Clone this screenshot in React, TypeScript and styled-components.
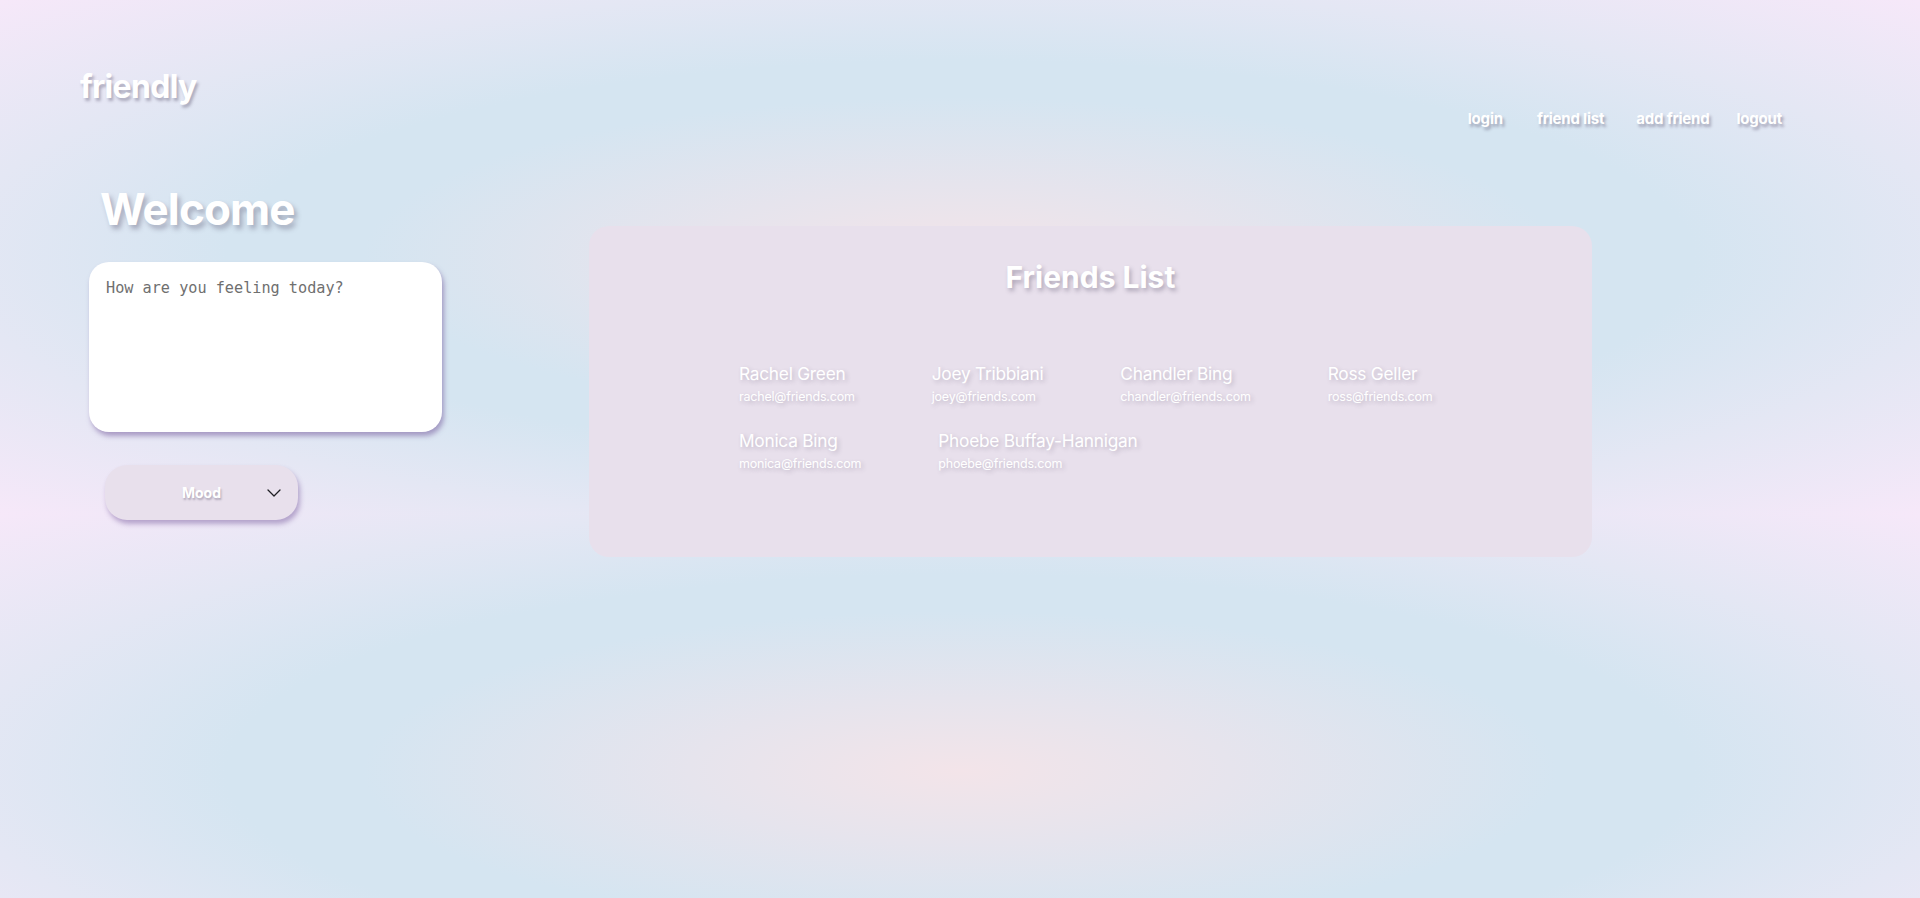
import React from "react";
import styled, { createGlobalStyle } from "styled-components";

const GlobalStyle = createGlobalStyle`
  html, body {
    margin: 0;
    padding: 0;
  }
  body {
    font-family: Inter, "Noto Sans", sans-serif;
  }
`;

const Page = styled.div`
  min-height: 100vh;
  box-sizing: border-box;
  padding: 71px 138px 0 80px;
  background-image: radial-gradient(
    ellipse farthest-corner at 50% 50%,
    #f3e4e9 0%,
    #e6e4ed 20%,
    #d5e5f1 44%,
    #d5e5f1 54%,
    #e4e7f4 74%,
    #f6e8f9 100%
  );
  background-size: 100% 514px;
  background-repeat: repeat;
  font-family: Inter, "Noto Sans", sans-serif;
`;

const Header = styled.header`
  display: flex;
  justify-content: space-between;
  align-items: flex-start;
  height: 116px;
`;

const Logo = styled.div`
  font-size: 32px;
  font-weight: 700;
  line-height: 1;
  color: #ffffff;
  letter-spacing: -0.7px;
  text-shadow: 2px 3px 3px rgba(70, 60, 90, 0.35);
`;

const Nav = styled.nav`
  display: flex;
  margin-top: 40px;
`;

const NavLink = styled.a<{ $space: number }>`
  margin-left: ${(p) => p.$space}px;
  font-size: 15px;
  font-weight: 700;
  line-height: 1;
  letter-spacing: -0.2px;
  color: #ffffff;
  text-decoration: none;
  text-shadow: 2px 3px 3px rgba(70, 60, 90, 0.4);
  cursor: pointer;
`;

const Main = styled.main`
  display: flex;
  align-items: flex-start;
`;

const LeftColumn = styled.section`
  display: flex;
  flex-direction: column;
  align-items: flex-start;
  margin-left: 9px;
  width: 353px;
`;

const Welcome = styled.h1`
  margin: 0 0 0 11px;
  font-size: 44px;
  line-height: 44px;
  font-weight: 700;
  letter-spacing: -0.9px;
  color: #ffffff;
  text-shadow: 3px 4px 5px rgba(70, 60, 90, 0.35);
`;

const MoodInput = styled.textarea`
  margin-top: 31px;
  width: 353px;
  height: 170px;
  box-sizing: border-box;
  border: none;
  outline: none;
  border-radius: 20px;
  padding: 16px 17px 15px;
  background: #ffffff;
  font-family: "DejaVu Sans Mono", "Liberation Mono", monospace;
  font-size: 15.2px;
  line-height: 21px;
  color: #333;
  resize: none;
  box-shadow: 2px 4px 5px rgba(110, 80, 150, 0.5);

  &::placeholder {
    color: #6f6f6f;
  }
`;

const MoodSelect = styled.button`
  margin-top: 33px;
  margin-left: 16px;
  width: 193px;
  height: 55px;
  box-sizing: border-box;
  border: none;
  border-radius: 22px;
  background: #e8e0ec;
  display: grid;
  grid-template-columns: 1fr auto 1fr;
  align-items: center;
  padding: 0 17px 0 17px;
  font-family: Inter, "Noto Sans", sans-serif;
  font-size: 14px;
  font-weight: 700;
  color: #ffffff;
  text-shadow: 1px 2px 2px rgba(70, 60, 90, 0.35);
  box-shadow: 2px 4px 5px rgba(110, 80, 150, 0.45);
  cursor: pointer;
`;

const MoodLabel = styled.span`
  grid-column: 2;
`;

const Chevron = styled.svg`
  grid-column: 3;
  justify-self: end;
  width: 14px;
  height: 8px;
`;

const Card = styled.section`
  margin-left: 147px;
  margin-top: 39px;
  width: 1003px;
  height: 331px;
  box-sizing: border-box;
  padding-top: 36px;
  border-radius: 20px;
  background: #e8e0ec;
`;

const CardTitle = styled.h2`
  margin: 0;
  text-align: center;
  font-size: 30px;
  line-height: 30px;
  font-weight: 700;
  color: #ffffff;
  text-shadow: 2px 3px 4px rgba(70, 60, 90, 0.35);
`;

const FriendGrid = styled.ul`
  list-style: none;
  margin: 71px 0 0 150px;
  padding: 0;
  width: 760px;
  display: flex;
  flex-wrap: wrap;
  column-gap: 77px;
  row-gap: 24px;
`;

const Friend = styled.li`
  display: flex;
  flex-direction: column;
  gap: 3px;
  color: #ffffff;
  text-shadow: 2px 2px 4px rgba(70, 60, 90, 0.25);
`;

const FriendName = styled.span`
  font-size: 17.3px;
  line-height: 22px;
  font-weight: 400;
  letter-spacing: -0.25px;
`;

const FriendEmail = styled.span`
  font-size: 12.5px;
  line-height: 18px;
  font-weight: 400;
  letter-spacing: -0.2px;
`;

const friends = [
  { name: "Rachel Green", email: "rachel@friends.com" },
  { name: "Joey Tribbiani", email: "joey@friends.com" },
  { name: "Chandler Bing", email: "chandler@friends.com" },
  { name: "Ross Geller", email: "ross@friends.com" },
  { name: "Monica Bing", email: "monica@friends.com" },
  { name: "Phoebe Buffay-Hannigan", email: "phoebe@friends.com" },
];

const links = [
  { label: "login", space: 0 },
  { label: "friend list", space: 34 },
  { label: "add friend", space: 32 },
  { label: "logout", space: 27 },
];

export default function App() {
  return (
    <>
      <GlobalStyle />
      <Page>
        <Header>
          <Logo>friendly</Logo>
          <Nav>
            {links.map((l) => (
              <NavLink key={l.label} $space={l.space}>
                {l.label}
              </NavLink>
            ))}
          </Nav>
        </Header>
        <Main>
          <LeftColumn>
            <Welcome>Welcome</Welcome>
            <MoodInput placeholder="How are you feeling today?" />
            <MoodSelect type="button">
              <MoodLabel>Mood</MoodLabel>
              <Chevron viewBox="0 0 14 8" fill="none">
                <polyline
                  points="1,1 7,7 13,1"
                  stroke="#1f1f24"
                  strokeWidth="1.3"
                  strokeLinecap="round"
                  strokeLinejoin="round"
                />
              </Chevron>
            </MoodSelect>
          </LeftColumn>
          <Card>
            <CardTitle>Friends List</CardTitle>
            <FriendGrid>
              {friends.map((f) => (
                <Friend key={f.email}>
                  <FriendName>{f.name}</FriendName>
                  <FriendEmail>{f.email}</FriendEmail>
                </Friend>
              ))}
            </FriendGrid>
          </Card>
        </Main>
      </Page>
    </>
  );
}
